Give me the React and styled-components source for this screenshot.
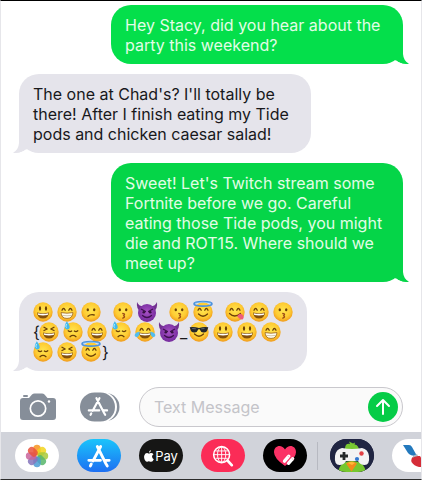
import React from 'react';
import styled, { createGlobalStyle } from 'styled-components';

const GlobalStyle = createGlobalStyle`
  *, *::before, *::after { box-sizing: border-box; }
  body {
    margin: 0;
    background: #ffffff;
    font-family: Inter, "Liberation Sans", sans-serif;
  }
`;

const Screen = styled.main`
  display: flex;
  flex-direction: column;
  min-height: 100vh;
  overflow: hidden;
  border: 1px solid #e6e6ea;
  border-top-color: #000000;
  border-bottom-color: #2b2b2b;
`;

const Thread = styled.section`
  display: flex;
  flex: 1;
  flex-direction: column;
  gap: 10px;
  padding: 4px 18px 0;
`;

const Bubble = styled.article`
  position: relative;
  align-self: ${(p) => (p.$sent ? 'flex-end' : 'flex-start')};
  max-width: 292px;
  padding: 10px 14px 9px;
  border-radius: 20px;
  background: ${(p) => p.$tone};
  color: ${(p) => (p.$sent ? '#e2fde6' : '#18181b')};
  font-size: 16px;
  line-height: 20px;
`;

const BubbleText = styled.p`
  margin: 0;
`;

const TailShape = styled.svg`
  position: absolute;
  bottom: 0;
  ${(p) => (p.$sent ? 'right: -6px;' : 'left: -6px; transform: scaleX(-1);')}
`;

const EmojiLine = styled.div`
  display: flex;
  height: 20px;
`;

const EmojiGlyph = styled.svg`
  flex: none;
  overflow: visible;
  margin-right: 4px;

  &:last-child { margin-right: 0; }
`;

const Symbol = styled.span`
  width: 6px;
  font-size: 16px;

  ${EmojiGlyph} + & {
    width: 9px;
    margin-left: -3px;
  }
`;

const Gap = styled.span`
  width: 8px;
`;

const Composer = styled.form`
  display: flex;
  align-items: center;
  padding: 16px 18px 5px 19px;
`;

const IconButton = styled.button`
  display: flex;
  flex: none;
  padding: 0;
  border: 0;
  background: none;
  margin-right: ${(p) => p.$after};
`;

const Field = styled.div`
  display: flex;
  flex: 1;
  align-items: center;
  min-width: 0;
  height: 40px;
  padding: 0 4px 0 14px;
  border: 1px solid #c9c8cd;
  border-radius: 20px;
  background: #fafafa;
`;

const TextInput = styled.input`
  flex: 1;
  min-width: 0;
  padding: 0;
  border: 0;
  outline: 0;
  background: transparent;
  font: inherit;
  font-size: 16px;
  color: #18181b;

  &::placeholder { color: #c4c4c9; opacity: 1; }
`;

const SendButton = styled.button`
  display: flex;
  flex: none;
  align-items: center;
  justify-content: center;
  width: 30px;
  height: 30px;
  padding: 0;
  border: 0;
  border-radius: 50%;
  background: #05cc47;
`;

const AppStrip = styled.nav`
  display: flex;
  align-items: center;
  gap: 18px;
  height: 47px;
  padding-left: 14px;
  overflow: hidden;
  background: #d1d3da;
`;

const AppButton = styled.button`
  display: flex;
  flex: none;
  align-items: center;
  justify-content: center;
  gap: 1px;
  width: 44px;
  height: 33px;
  padding: 0;
  overflow: hidden;
  border: 0;
  border-radius: 17px;
  background: ${(p) => p.$fill};
  color: #ffffff;
  font-family: inherit;
  font-size: 13px;
`;

const Divider = styled.span`
  flex: none;
  width: 1px;
  height: 28px;
  margin: 0 -6px 0 -8px;
  background: #b7b9c1;
`;

const Defs = styled.svg`
  position: absolute;
`;

const ink = '#6b4008';

function Gradients() {
  return (
    <Defs width="0" height="0" aria-hidden="true">
      <defs>
        <radialGradient id="face" cx="50%" cy="42%" r="58%">
          <stop offset="0" stopColor="#ffe54f" />
          <stop offset="0.65" stopColor="#fecb32" />
          <stop offset="1" stopColor="#f09a1c" />
        </radialGradient>
        <radialGradient id="imp" cx="50%" cy="45%" r="60%">
          <stop offset="0" stopColor="#a650c4" />
          <stop offset="1" stopColor="#71289a" />
        </radialGradient>
      </defs>
    </Defs>
  );
}

const stroke = { fill: 'none', stroke: ink, strokeWidth: 1.3, strokeLinecap: 'round', strokeLinejoin: 'round' };

const ovalEyes = (
  <g fill={ink}>
    <ellipse cx="7" cy="6.500" rx="1.1" ry="2.200" />
    <ellipse cx="13" cy="6.500" rx="1.1" ry="2.200" />
  </g>
);
const arcEyes = <path d="M5 8.2Q6.6 4.8 8.2 8.2M11.8 8.2Q13.4 4.8 15 8.2" {...stroke} />;
const squintEyes = <path d="M5 5.2L8.2 7L5 8.5M15 5.2L11.8 7L15 8.5" {...stroke} />;
const dotEyes = (
  <g fill={ink}>
    <ellipse cx="6.8" cy="7.8" rx="1.2" ry="1.5" />
    <ellipse cx="13.2" cy="7.8" rx="1.2" ry="1.5" />
  </g>
);
const openMouth = (
  <g>
    <path d="M4 10.6Q10 12 16 10.6Q15.5 16.6 10 16.6Q4.500 16.600 4 10.600Z" fill="#83500d" />
    <path d="M4.700 11.200Q10 12.400 15.300 11.200L14.700 13Q10 13.800 5.300 13Z" fill="#ffffff" />
  </g>
);
const teeth = (
  <g>
    <path d="M4 10.600Q10 11.800 16 10.600Q15.700 16.400 10 16.400Q4.300 16.400 4 10.600Z" fill="#fffdf0" stroke="#986016" strokeWidth="0.8" />
    <path d="M4.800 13.300Q10 14.300 15.200 13.300" fill="none" stroke="#a98d59" strokeWidth="0.5" />
  </g>
);
const smile = <path d="M5.500 12Q10 16.500 14.500 12" {...stroke} />;
const drop = 'M3.800 -0.800Q7.600 4 6.500 6.200Q4.500 8.500 2.200 6.400Q0.700 4.400 3.800 -0.800Z';

const features = {
  smiley: <>{ovalEyes}{openMouth}</>,
  beaming: <>{arcEyes}{teeth}</>,
  happy: <>{arcEyes}{openMouth}</>,
  squinting: <>{squintEyes}{openMouth}</>,
  confused: <>{dotEyes}<path d="M7 14.300Q9.500 12 13.200 13" {...stroke} /></>,
  kissing: <>{dotEyes}<path d="M9.800 11.500Q13 12 10.500 13.700Q13 14.900 9.800 16.200" {...stroke} stroke="#9d4c16" /></>,
  yum: (
    <>
      {arcEyes}
      <path d="M4.500 11.500Q9.500 16.500 15.500 11.500" {...stroke} />
      <path d="M12 14.200Q14.800 11 17 12.200Q20 15 17.800 17.200Q15.500 18.200 12 14.200Z" fill="#ef5d78" />
    </>
  ),
  sweating: (
    <>
      <path d="M5.200 8.800Q7 10.200 8.700 9M11.300 9Q13 10.200 14.800 8.800" {...stroke} />
      <path d="M7 14.700Q10 12.200 13 14.700" {...stroke} />
      <path d={drop} fill="#42b9ed" />
      <path d="M3.500 2Q2.200 4.700 3.500 5.600" fill="none" stroke="#b5edff" />
    </>
  ),
  joy: (
    <>
      {arcEyes}{openMouth}
      <path d="M4.600 9.500Q4.800 14.200 1.800 15.200Q-1.200 14.600 0 12Q1 10.200 4.600 9.500Z" fill="#51bdf0" />
      <path d="M15.400 9.500Q15.200 14.200 18.200 15.200Q21.200 14.600 20 12Q19 10.200 15.400 9.500Z" fill="#51bdf0" />
    </>
  ),
  halo: (
    <>
      {arcEyes}{smile}
      <ellipse cx="10" cy="1.900" rx="9" ry="2.300" fill="none" stroke="#4a91dd" strokeWidth="1.700" />
      <path d="M2 1.300Q10 -1.200 18 1.300" fill="none" stroke="#9dd7fb" strokeWidth="0.600" />
    </>
  ),
  cool: (
    <>
      {smile}
      <path d="M0.700 5.300Q5.500 4.700 10 6Q14.500 4.700 19.300 5.300L18.700 7Q17.800 10.800 14.500 10.500Q11.500 10.200 10.600 7.300H9.400Q8.500 10.200 5.500 10.500Q2.200 10.800 1.300 7Z" fill="#24272c" />
      <path d="M3.200 6.500L6.800 6.800M12.300 6.800L15.500 6.500" stroke="#77828d" strokeWidth="0.700" />
    </>
  ),
};

function Emoji({ name }) {
  if (name === 'imp') {
    return (
      <EmojiGlyph width="20" height="20" viewBox="0 0 20 20" role="img" aria-label="imp">
        <path d="M0 0Q-0.800 7 3.200 9L7.300 4.200Q1.800 4.700 0 0ZM20 0Q20.800 7 16.800 9L12.700 4.200Q18.200 4.700 20 0Z" fill="#71308f" />
        <circle cx="10" cy="11" r="9" fill="url(#imp)" />
        <path d="M4.500 7.200L8.500 9.500M15.500 7.200L11.500 9.500M5.500 13.500Q10 17.500 14.500 13.500" fill="none" stroke="#3f114f" strokeWidth="1.300" strokeLinecap="round" />
        <circle cx="6.800" cy="10.300" r="1.300" fill="#35103f" />
        <circle cx="13.200" cy="10.300" r="1.300" fill="#35103f" />
      </EmojiGlyph>
    );
  }
  return (
    <EmojiGlyph width="20" height="20" viewBox="0 0 20 20" role="img" aria-label={name}>
      <circle cx="10" cy="10" r="9.700" fill="url(#face)" />
      {features[name]}
    </EmojiGlyph>
  );
}

const emojiLines = [
  ['smiley', 'beaming', 'confused', ' ', 'kissing', 'imp', ' ', 'kissing', 'halo', ' ', 'yum', 'happy', 'kissing'],
  ['{', 'squinting', 'sweating', 'happy', 'sweating', 'joy', 'imp', '_', 'cool', 'smiley', 'smiley', 'beaming'],
  ['sweating', 'squinting', 'halo', '}'],
];

function EmojiText() {
  return emojiLines.map((line, row) => (
    <EmojiLine key={row}>
      {line.map((item, i) => {
        if (item === ' ') return <Gap key={i} />;
        if (item.length === 1) return <Symbol key={i}>{item}</Symbol>;
        return <Emoji key={i} name={item} />;
      })}
    </EmojiLine>
  ));
}

const messages = [
  { sent: true, tone: '#04df4b', body: 'Hey Stacy, did you hear about the party this weekend?' },
  { sent: false, tone: '#e5e4eb', body: "The one at Chad's? I'll totally be there! After I finish eating my Tide pods and chicken caesar salad!" },
  { sent: true, tone: '#05d548', body: "Sweet! Let's Twitch stream some Fortnite before we go. Careful eating those Tide pods, you might die and ROT15. Where should we meet up?" },
  { sent: false, tone: '#e5e4eb', emoji: true },
];

function Message({ sent, tone, body, emoji }) {
  return (
    <Bubble $sent={sent} $tone={tone}>
      <TailShape $sent={sent} width="18" height="20" viewBox="4 0 18 20" aria-hidden="true">
        <path d="M16 0V10Q16.500 17 22 19.700Q14 20.700 9 16.500L4 15V0Z" fill={tone} />
        <path d="M4 20Q7 19 9 16.500Q11.500 18.500 15 19.500V20Z" fill="#ffffff" />
      </TailShape>
      {emoji ? <EmojiText /> : <BubbleText>{body}</BubbleText>}
    </Bubble>
  );
}

function StoreMark() {
  return (
    <svg width="24" height="24" viewBox="0 0 24 24" fill="none" stroke="#ffffff" strokeWidth="2.800" strokeLinecap="round" aria-hidden="true">
      <path d="M10.300 2.500L18.800 19.500L20.300 22M13.700 2.500L6 17M4.300 20L3.300 22M1.800 16.300H13.500M18.300 16.300H22.200" />
    </svg>
  );
}

function CameraIcon() {
  return (
    <svg width="36" height="28" viewBox="0 0 36 28" aria-hidden="true">
      <path d="M3 5H9L12 1.600Q13 0.500 14.500 0.500H22Q23.500 0.500 24.500 1.600L27.500 5H33Q36 5 36 8V24Q36 27 33 27H3Q0 27 0 24V8Q0 5 3 5Z" fill="#868e99" />
      <rect x="3" y="2" width="5" height="2" rx="1" fill="#868e99" />
      <circle cx="18" cy="15.500" r="7.700" fill="none" stroke="#ffffff" strokeWidth="1.700" />
      <circle cx="29" cy="8.500" r="1.200" fill="#ffffff" />
    </svg>
  );
}

function AppsIcon() {
  return (
    <svg width="40" height="30" viewBox="0 0 40 30" aria-hidden="true">
      <rect x="5" y="1" width="34.500" height="28" rx="14" fill="#868e99" />
      <rect x="0" y="-0.500" width="37" height="31" rx="15.500" fill="#ffffff" />
      <rect x="0" y="0.500" width="35" height="29" rx="14.500" fill="#868e99" />
      <g transform="translate(7.500 4.500) scale(0.870)" fill="none" stroke="#ffffff" strokeWidth="2.500" strokeLinecap="round">
        <path d="M10.300 2L18.800 18.500L20.300 21M13.700 2L6 16.500M4.300 19.500L3.500 21M1.500 16H13.500M18.300 16H22.500" />
      </g>
    </svg>
  );
}

const petals = ['#f7941f', '#f2d51d', '#a8c93a', '#57b66b', '#4b9bd4', '#8574bb', '#c9649b', '#e9523c'];

function PhotosIcon() {
  return (
    <svg width="24" height="24" viewBox="0 0 24 24" aria-hidden="true">
      {petals.map((color, i) => (
        <rect key={color} x="8.300" y="0.800" width="7.400" height="10.600" rx="3.700" fill={color} fillOpacity="0.850" transform={`rotate(${i * 45} 12 12)`} />
      ))}
    </svg>
  );
}

function AppleIcon() {
  return (
    <svg width="10" height="12" viewBox="0 0 20 24" fill="#ffffff" aria-hidden="true">
      <path d="M14 0Q14 4.500 10 5.500Q9.800 1.500 14 0ZM10 7.300Q11.500 6.300 14 6.100Q17.300 6.100 19 8.700Q15.800 10.800 16.200 13.800Q16.500 17 19.600 18.300Q17.500 23.500 14.500 23.700Q12.500 23.700 11.300 23Q9.700 22.300 7.900 23.100Q6.800 23.700 5.700 23.700Q3.500 23.500 1.400 19.500Q-0.800 14.700 0.800 10.300Q2.500 6.400 6 6.200Q8 6.200 10 7.300Z" />
    </svg>
  );
}

function ImageSearchIcon() {
  return (
    <svg width="22" height="22" viewBox="0 0 24 24" fill="none" stroke="#ffffff" aria-hidden="true">
      <circle cx="10.500" cy="10.500" r="8.700" strokeWidth="1.700" />
      <path d="M17 17L21.500 22" strokeWidth="3" strokeLinecap="round" />
      <path d="M10.500 2V19M2 10.500H19M3.800 6.500H17.200M3.800 14.500H17.200" strokeWidth="1" />
      <ellipse cx="10.500" cy="10.500" rx="4.500" ry="8.500" strokeWidth="1" />
    </svg>
  );
}

function HeartIcon() {
  return (
    <svg width="26" height="24" viewBox="0 0 26 24" aria-hidden="true">
      <path d="M13 22Q2 14.500 2 8.300C2 1 10 0 13 5.500C16 0 24 1 24 8.300Q24 14.500 13 22Z" fill="#fb3165" />
      <g stroke="#ffffff" strokeWidth="3.300" strokeLinecap="round">
        <path d="M16.800 12.200L12.500 17.200M20.700 14.700L16.500 19.300" />
      </g>
      <path d="M15.500 11.800L17.800 13.700M19.500 14.200L21.800 16" stroke="#f9a4ba" strokeWidth="0.800" />
    </svg>
  );
}

function GamePigeonIcon() {
  return (
    <svg width="44" height="33" viewBox="0 0 44 33" aria-hidden="true">
      <rect width="44" height="33" fill="#202542" />
      <path d="M8 33Q10 22 22 22Q34 22 36 33Z" fill="#76c72e" />
      <path d="M15 10Q15 4 20 5L19 2.500L23 4.500L25 3.500L24.500 5.500Q29 6 29 12Z" fill="#79c832" />
      <path d="M12 9Q22 11 32 9Q38 10 39 17Q40 26 34.500 26Q30 26 28 22H16Q14 26 9.500 26Q4 26 5 17Q6 10 12 9Z" fill="#f3f3f3" />
      <path d="M14 13V21M10 17H18" stroke="#252829" strokeWidth="2.800" />
      <circle cx="31.500" cy="14.500" r="2.200" fill="#e24144" />
      <circle cx="27" cy="20" r="2.100" fill="#3478cf" />
      <path d="M16 24.500Q22 20.500 27 24.500L21.500 32.500Z" fill="#f48b1b" />
      <path d="M18 24Q21.500 22 25 24L22 26Z" fill="#ffbd38" />
    </svg>
  );
}

function AirlineIcon() {
  return (
    <svg width="44" height="33" viewBox="0 0 44 33" aria-hidden="true">
      <path d="M11 6H17Q19 6 20 8L25 17Q18 17 16 14Z" fill="#2379bd" />
      <path d="M27 28Q22 27 19.500 23Q18.500 19 22 17H28L34 28Z" fill="#d52d38" />
      <path d="M20 19Q22 15.500 25 15L26 17Q23 17.500 20 19Z" fill="#aeb9c2" />
    </svg>
  );
}

export default function App() {
  return (
    <Screen>
      <GlobalStyle />
      <Gradients />
      <Thread aria-label="Conversation">
        {messages.map((m, i) => <Message key={i} {...m} />)}
      </Thread>
      <Composer onSubmit={(e) => e.preventDefault()}>
        <IconButton type="button" aria-label="Camera" $after="24px"><CameraIcon /></IconButton>
        <IconButton type="button" aria-label="Apps" $after="19px"><AppsIcon /></IconButton>
        <Field>
          <TextInput type="text" placeholder="Text Message" aria-label="Text Message" />
          <SendButton type="submit" aria-label="Send">
            <svg width="18" height="18" viewBox="0 0 18 18" fill="none" stroke="#ffffff" strokeWidth="2" strokeLinecap="round" strokeLinejoin="round" aria-hidden="true">
              <path d="M9 16V2M3 8L9 2L15 8" />
            </svg>
          </SendButton>
        </Field>
      </Composer>
      <AppStrip aria-label="Message apps">
        <AppButton type="button" aria-label="Photos" $fill="#ffffff"><PhotosIcon /></AppButton>
        <AppButton type="button" aria-label="App Store" $fill="linear-gradient(#1ac4fb, #1d6ff2)"><StoreMark /></AppButton>
        <AppButton type="button" aria-label="Apple Pay" $fill="#161615"><AppleIcon />Pay</AppButton>
        <AppButton type="button" aria-label="Image search" $fill="#fb2c57"><ImageSearchIcon /></AppButton>
        <AppButton type="button" aria-label="Digital Touch" $fill="#000000"><HeartIcon /></AppButton>
        <Divider />
        <AppButton type="button" aria-label="Games" $fill="#202542"><GamePigeonIcon /></AppButton>
        <AppButton type="button" aria-label="Airline" $fill="#ffffff"><AirlineIcon /></AppButton>
      </AppStrip>
    </Screen>
  );
}
